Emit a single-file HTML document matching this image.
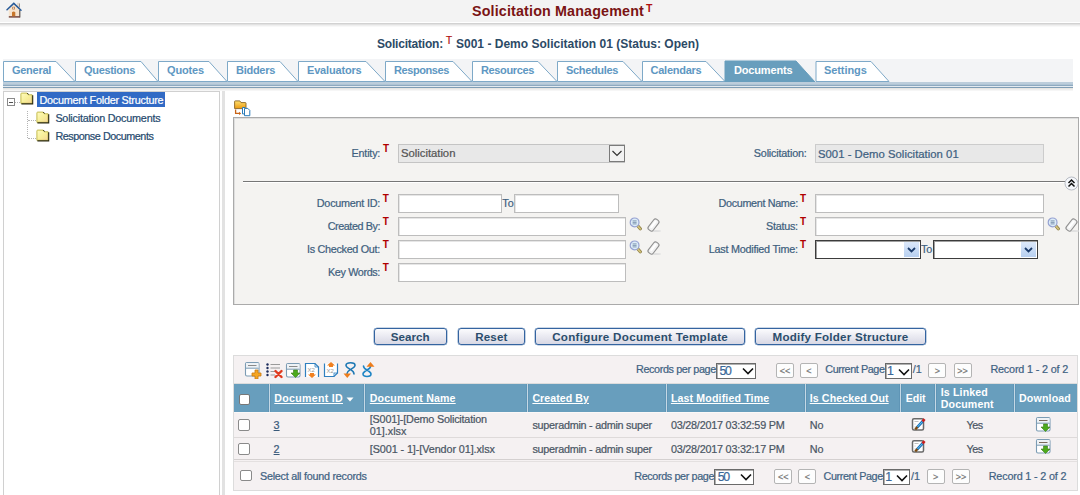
<!DOCTYPE html>
<html><head><meta charset="utf-8"><style>
html,body{margin:0;padding:0;width:1080px;height:495px;overflow:hidden;background:#fff;position:relative;font-family:"Liberation Sans", sans-serif;}
</style></head><body>
<div style="position:absolute;left:0px;top:0px;width:1080px;height:22px;background:#f3f3f3"></div>
<div style="position:absolute;left:0px;top:22px;width:1080px;height:1px;background:#ffffff"></div>
<div style="position:absolute;left:0px;top:23px;width:1080px;height:1px;background:#d2d2d2"></div>
<div style="position:absolute;left:0px;top:24px;width:1080px;height:1px;background:#e2e2e2"></div>
<div style="position:absolute;left:0px;top:25px;width:1080px;height:1px;background:#efefef"></div>
<div style="position:absolute;left:0px;top:26px;width:1080px;height:1px;background:#f8f8f8"></div>
<svg style="position:absolute;left:4px;top:1px" width="22" height="20" viewBox="0 0 22 20">
<rect x="13" y="1.8" width="2.5" height="4.5" fill="#e6dad0"/><rect x="15" y="2.5" width="0.8" height="4" fill="#8a8078"/>
<path d="M4.8 8.5 V16.2 H15.6 V8.5 L10 3.3 Z" fill="#f6e4cf"/>
<rect x="15.2" y="9" width="1.2" height="7.5" fill="#5e5550"/>
<rect x="4.8" y="15.2" width="11" height="1.4" fill="#6e3e36"/>
<path d="M8 15.2 V11.3 Q9.65 9.6 11.3 11.3 V15.2 Z" fill="#c8762a"/>
<rect x="8.3" y="5.8" width="2.6" height="2.6" fill="#c07038"/><rect x="9" y="6.4" width="1.2" height="1.4" fill="#d8eefa"/>
<path d="M3 8.8 L9.8 2.4 L17 9.2" fill="none" stroke="#285a98" stroke-width="1.5" stroke-linecap="round"/>
</svg>
<div style="position:absolute;left:472px;top:4px;-webkit-text-stroke:0.0px #7a1414;font-size:14.3px;line-height:14.3px;font-weight:bold;color:#7a1414;white-space:nowrap;letter-spacing:0.156px;">Solicitation Management</div>
<div style="position:absolute;left:646px;top:3px;-webkit-text-stroke:0.0px #b01010;font-size:10.5px;line-height:10.5px;font-weight:bold;color:#b01010;white-space:nowrap;">T</div>
<div style="position:absolute;left:377px;top:38px;-webkit-text-stroke:0.0px #2c4a66;font-size:12px;line-height:12px;font-weight:bold;color:#2c4a66;white-space:nowrap;letter-spacing:-0.206px;">Solicitation:</div>
<div style="position:absolute;left:446px;top:36px;-webkit-text-stroke:0.22px #b01010;font-size:10px;line-height:10px;font-weight:normal;color:#b01010;white-space:nowrap;">T</div>
<div style="position:absolute;left:456px;top:38px;-webkit-text-stroke:0.0px #2c4a66;font-size:12px;line-height:12px;font-weight:bold;color:#2c4a66;white-space:nowrap;letter-spacing:0.007px;">S001 - Demo Solicitation 01 (Status: Open)</div>
<div style="position:absolute;left:3px;top:59px;width:1070px;height:23px;background:#f3f4f6"></div>
<svg style="position:absolute;left:0;top:0" width="1080" height="90"><polygon points="3.5,61.5 56,61.5 75,81.5 3.5,81.5" fill="#ffffff" stroke="#7ea9c8" stroke-width="1"/><polygon points="75.5,61.5 141,61.5 158,81.5 75.5,81.5" fill="#ffffff" stroke="#7ea9c8" stroke-width="1"/><polygon points="158.5,61.5 209,61.5 227,81.5 158.5,81.5" fill="#ffffff" stroke="#7ea9c8" stroke-width="1"/><polygon points="227.5,61.5 280,61.5 298,81.5 227.5,81.5" fill="#ffffff" stroke="#7ea9c8" stroke-width="1"/><polygon points="298.5,61.5 366,61.5 385,81.5 298.5,81.5" fill="#ffffff" stroke="#7ea9c8" stroke-width="1"/><polygon points="385.5,61.5 453,61.5 472,81.5 385.5,81.5" fill="#ffffff" stroke="#7ea9c8" stroke-width="1"/><polygon points="472.5,61.5 538,61.5 557,81.5 472.5,81.5" fill="#ffffff" stroke="#7ea9c8" stroke-width="1"/><polygon points="557.5,61.5 623,61.5 642,81.5 557.5,81.5" fill="#ffffff" stroke="#7ea9c8" stroke-width="1"/><polygon points="642.5,61.5 706,61.5 725,81.5 642.5,81.5" fill="#ffffff" stroke="#7ea9c8" stroke-width="1"/><polygon points="725,61 796,61 815,82 725,82" fill="#689ebd" stroke="#689ebd" stroke-width="1"/><polygon points="816.0,61.5 871,61.5 889,81.5 816.0,81.5" fill="#ffffff" stroke="#7ea9c8" stroke-width="1"/></svg>
<div style="position:absolute;left:12px;top:65px;-webkit-text-stroke:0.0px #5e97c2;font-size:11px;line-height:11px;font-weight:bold;color:#5e97c2;white-space:nowrap;letter-spacing:-0.281px;">General</div>
<div style="position:absolute;left:84px;top:65px;-webkit-text-stroke:0.0px #5e97c2;font-size:11px;line-height:11px;font-weight:bold;color:#5e97c2;white-space:nowrap;letter-spacing:-0.311px;">Questions</div>
<div style="position:absolute;left:167px;top:65px;-webkit-text-stroke:0.0px #5e97c2;font-size:11px;line-height:11px;font-weight:bold;color:#5e97c2;white-space:nowrap;letter-spacing:-0.151px;">Quotes</div>
<div style="position:absolute;left:236px;top:65px;-webkit-text-stroke:0.0px #5e97c2;font-size:11px;line-height:11px;font-weight:bold;color:#5e97c2;white-space:nowrap;letter-spacing:-0.281px;">Bidders</div>
<div style="position:absolute;left:307px;top:65px;-webkit-text-stroke:0.0px #5e97c2;font-size:11px;line-height:11px;font-weight:bold;color:#5e97c2;white-space:nowrap;letter-spacing:-0.175px;">Evaluators</div>
<div style="position:absolute;left:394px;top:65px;-webkit-text-stroke:0.0px #5e97c2;font-size:11px;line-height:11px;font-weight:bold;color:#5e97c2;white-space:nowrap;letter-spacing:-0.411px;">Responses</div>
<div style="position:absolute;left:481px;top:65px;-webkit-text-stroke:0.0px #5e97c2;font-size:11px;line-height:11px;font-weight:bold;color:#5e97c2;white-space:nowrap;letter-spacing:-0.363px;">Resources</div>
<div style="position:absolute;left:566px;top:65px;-webkit-text-stroke:0.0px #5e97c2;font-size:11px;line-height:11px;font-weight:bold;color:#5e97c2;white-space:nowrap;letter-spacing:-0.337px;">Schedules</div>
<div style="position:absolute;left:650.5px;top:65px;-webkit-text-stroke:0.0px #5e97c2;font-size:11px;line-height:11px;font-weight:bold;color:#5e97c2;white-space:nowrap;letter-spacing:-0.245px;">Calendars</div>
<div style="position:absolute;left:734px;top:65px;-webkit-text-stroke:0.0px #ffffff;font-size:11px;line-height:11px;font-weight:bold;color:#ffffff;white-space:nowrap;letter-spacing:-0.167px;">Documents</div>
<div style="position:absolute;left:824px;top:65px;-webkit-text-stroke:0.0px #5e97c2;font-size:11px;line-height:11px;font-weight:bold;color:#5e97c2;white-space:nowrap;letter-spacing:-0.088px;">Settings</div>
<div style="position:absolute;left:3px;top:82px;width:1070px;height:2px;background:#bccddb"></div>
<div style="position:absolute;left:3px;top:84px;width:1070px;height:1px;background:#b0c4d4"></div>
<div style="position:absolute;left:3px;top:85px;width:1070px;height:1px;background:#8eaac0"></div>
<div style="position:absolute;left:3px;top:86px;width:1070px;height:1px;background:#e3eaf0"></div>
<div style="position:absolute;left:3px;top:87px;width:1070px;height:1px;background:#7f9db5"></div>
<div style="position:absolute;left:3px;top:88px;width:1070px;height:1px;background:#e8e6e2"></div>
<div style="position:absolute;left:3px;top:89px;width:1070px;height:1px;background:#eeeeee"></div>
<div style="position:absolute;left:3px;top:90px;width:1070px;height:1px;background:#f6f6f6"></div>
<div style="position:absolute;left:3px;top:91px;width:217px;height:420px;border:1px solid #d0d0d0;box-sizing:border-box;background:#fff"></div>
<div style="position:absolute;left:222px;top:91px;width:3px;height:420px;background:#e2e2e2"></div>
<div style="position:absolute;left:7px;top:98px;width:8px;height:8px;border:1px solid #8a8a8a;box-sizing:border-box;background:#fff"></div>
<div style="position:absolute;left:9px;top:101.5px;width:4px;height:1.5px;background:#505050"></div>
<div style="position:absolute;left:15px;top:102px;width:5px;height:1px;border-top:1px dotted #b4b4b4"></div>
<div style="position:absolute;left:27px;top:111px;width:1px;height:27px;border-left:1px dotted #b4b4b4"></div>
<div style="position:absolute;left:28px;top:120px;width:8px;height:1px;border-top:1px dotted #b4b4b4"></div>
<div style="position:absolute;left:28px;top:138px;width:8px;height:1px;border-top:1px dotted #b4b4b4"></div>
<svg style="position:absolute;left:20px;top:92px" width="14" height="13" viewBox="0 0 14 13">
<defs><linearGradient id="yf2092" x1="0" y1="0" x2="1" y2="1"><stop offset="0" stop-color="#fffcc0"/><stop offset="0.55" stop-color="#f7ee98"/><stop offset="1" stop-color="#f6d49a"/></linearGradient></defs>
<path d="M0.9 2 Q0.9 1.1 1.7 1.1 H7.1 L8.3 2.8 H12.1 V11.3 H0.9 Z" fill="url(#yf2092)" stroke="#bdb440" stroke-width="0.9"/>
<path d="M12.7 3.2 V11.9 H1.4" fill="none" stroke="#2a2810" stroke-width="1.1"/>
<path d="M7.3 1 L8.5 2.6" fill="none" stroke="#2a2810" stroke-width="0.9"/>
</svg>
<svg style="position:absolute;left:36px;top:111px" width="14" height="13" viewBox="0 0 14 13">
<defs><linearGradient id="yf36111" x1="0" y1="0" x2="1" y2="1"><stop offset="0" stop-color="#fffcc0"/><stop offset="0.55" stop-color="#f7ee98"/><stop offset="1" stop-color="#f6d49a"/></linearGradient></defs>
<path d="M0.9 2 Q0.9 1.1 1.7 1.1 H7.1 L8.3 2.8 H12.1 V11.3 H0.9 Z" fill="url(#yf36111)" stroke="#bdb440" stroke-width="0.9"/>
<path d="M12.7 3.2 V11.9 H1.4" fill="none" stroke="#2a2810" stroke-width="1.1"/>
<path d="M7.3 1 L8.5 2.6" fill="none" stroke="#2a2810" stroke-width="0.9"/>
</svg>
<svg style="position:absolute;left:36px;top:129px" width="14" height="13" viewBox="0 0 14 13">
<defs><linearGradient id="yf36129" x1="0" y1="0" x2="1" y2="1"><stop offset="0" stop-color="#fffcc0"/><stop offset="0.55" stop-color="#f7ee98"/><stop offset="1" stop-color="#f6d49a"/></linearGradient></defs>
<path d="M0.9 2 Q0.9 1.1 1.7 1.1 H7.1 L8.3 2.8 H12.1 V11.3 H0.9 Z" fill="url(#yf36129)" stroke="#bdb440" stroke-width="0.9"/>
<path d="M12.7 3.2 V11.9 H1.4" fill="none" stroke="#2a2810" stroke-width="1.1"/>
<path d="M7.3 1 L8.5 2.6" fill="none" stroke="#2a2810" stroke-width="0.9"/>
</svg>
<div style="position:absolute;left:37px;top:92px;width:128px;height:15px;background:#316ac5"></div>
<div style="position:absolute;left:39.4px;top:95px;-webkit-text-stroke:0.22px #ffffff;font-size:10.8px;line-height:10.8px;font-weight:normal;color:#ffffff;white-space:nowrap;letter-spacing:-0.225px;">Document Folder Structure</div>
<div style="position:absolute;left:55.4px;top:113px;-webkit-text-stroke:0.22px #264a6e;font-size:10.8px;line-height:10.8px;font-weight:normal;color:#264a6e;white-space:nowrap;letter-spacing:-0.219px;">Solicitation Documents</div>
<div style="position:absolute;left:55.4px;top:131px;-webkit-text-stroke:0.22px #264a6e;font-size:10.8px;line-height:10.8px;font-weight:normal;color:#264a6e;white-space:nowrap;letter-spacing:-0.457px;">Response Documents</div>
<div style="position:absolute;left:233px;top:117px;width:846px;height:188px;border:1px solid #aaaaaa;box-sizing:border-box;background:#f4f3f1;box-shadow:inset 1px 1px 0 #dedede"></div>
<div style="position:absolute;left:351.5px;top:148px;-webkit-text-stroke:0.22px #3e5f7e;font-size:10.8px;line-height:10.8px;font-weight:normal;color:#3e5f7e;white-space:nowrap;letter-spacing:-0.188px;">Entity:</div>
<div style="position:absolute;left:383px;top:144px;-webkit-text-stroke:0.0px #b00000;font-size:10px;line-height:10px;font-weight:bold;color:#b00000;white-space:nowrap;">T</div>
<div style="position:absolute;left:398px;top:144px;width:227px;height:19px;border:1px solid #c4c4c4;box-sizing:border-box;background:#e8e8e8"></div>
<div style="position:absolute;left:401px;top:148px;-webkit-text-stroke:0.22px #555555;font-size:11.3px;line-height:11.3px;font-weight:normal;color:#555555;white-space:nowrap;letter-spacing:-0.020px;">Solicitation</div>
<div style="position:absolute;left:609px;top:145px;width:16px;height:17px;border:1px solid #7a7a7a;box-sizing:border-box;background:#f2f2f2"></div>
<svg style="position:absolute;left:609px;top:145px" width="16" height="17"><path d="M3.5 6 L8 10.5 L12.5 6" fill="none" stroke="#333" stroke-width="1.2"/></svg>
<div style="position:absolute;left:753.8px;top:148px;-webkit-text-stroke:0.22px #3e5f7e;font-size:10.8px;line-height:10.8px;font-weight:normal;color:#3e5f7e;white-space:nowrap;letter-spacing:-0.186px;">Solicitation:</div>
<div style="position:absolute;left:815px;top:144px;width:229px;height:19px;border:1px solid #cccccc;box-sizing:border-box;background:#e8e8e8"></div>
<div style="position:absolute;left:818px;top:149px;-webkit-text-stroke:0.22px #3d6080;font-size:11.3px;line-height:11.3px;font-weight:normal;color:#3d6080;white-space:nowrap;letter-spacing:0.025px;">S001 - Demo Solicitation 01</div>
<div style="position:absolute;left:243px;top:181px;width:822px;height:1px;background:#767676"></div>
<div style="position:absolute;left:243px;top:182px;width:822px;height:1px;background:#ffffff"></div>
<svg style="position:absolute;left:1064px;top:176px" width="15" height="15" viewBox="0 0 15 15">
<circle cx="7.5" cy="7.5" r="6.5" fill="#f4f6fa" stroke="#b8bcc4" stroke-width="1"/>
<path d="M4.5 7 L7.5 4 L10.5 7 M4.5 10.5 L7.5 7.5 L10.5 10.5" fill="none" stroke="#111" stroke-width="1.5"/>
</svg>
<div style="position:absolute;left:316.8px;top:198px;-webkit-text-stroke:0.22px #3e5f7e;font-size:10.8px;line-height:10.8px;font-weight:normal;color:#3e5f7e;white-space:nowrap;letter-spacing:-0.235px;">Document ID:</div>
<div style="position:absolute;left:382.7px;top:194px;-webkit-text-stroke:0.0px #b00000;font-size:10px;line-height:10px;font-weight:bold;color:#b00000;white-space:nowrap;">T</div>
<div style="position:absolute;left:327.7px;top:221px;-webkit-text-stroke:0.22px #3e5f7e;font-size:10.8px;line-height:10.8px;font-weight:normal;color:#3e5f7e;white-space:nowrap;letter-spacing:-0.429px;">Created By:</div>
<div style="position:absolute;left:382.7px;top:217px;-webkit-text-stroke:0.0px #b00000;font-size:10px;line-height:10px;font-weight:bold;color:#b00000;white-space:nowrap;">T</div>
<div style="position:absolute;left:307px;top:244px;-webkit-text-stroke:0.22px #3e5f7e;font-size:10.8px;line-height:10.8px;font-weight:normal;color:#3e5f7e;white-space:nowrap;letter-spacing:-0.295px;">Is Checked Out:</div>
<div style="position:absolute;left:382.7px;top:240px;-webkit-text-stroke:0.0px #b00000;font-size:10px;line-height:10px;font-weight:bold;color:#b00000;white-space:nowrap;">T</div>
<div style="position:absolute;left:328px;top:267px;-webkit-text-stroke:0.22px #3e5f7e;font-size:10.8px;line-height:10.8px;font-weight:normal;color:#3e5f7e;white-space:nowrap;letter-spacing:-0.361px;">Key Words:</div>
<div style="position:absolute;left:382.7px;top:263px;-webkit-text-stroke:0.0px #b00000;font-size:10px;line-height:10px;font-weight:bold;color:#b00000;white-space:nowrap;">T</div>
<div style="position:absolute;left:398px;top:194px;width:104px;height:19px;border:1px solid #bdbdbd;box-sizing:border-box;background:#ffffff;box-shadow:inset 1px 1px 0 #e6e6e6"></div>
<div style="position:absolute;left:502.3px;top:198px;-webkit-text-stroke:0.22px #3e5f7e;font-size:10.8px;line-height:10.8px;font-weight:normal;color:#3e5f7e;white-space:nowrap;letter-spacing:-0.053px;">To</div>
<div style="position:absolute;left:514px;top:194px;width:105px;height:19px;border:1px solid #bdbdbd;box-sizing:border-box;background:#ffffff;box-shadow:inset 1px 1px 0 #e6e6e6"></div>
<div style="position:absolute;left:398px;top:217px;width:228px;height:19px;border:1px solid #bdbdbd;box-sizing:border-box;background:#ffffff;box-shadow:inset 1px 1px 0 #e6e6e6"></div>
<div style="position:absolute;left:398px;top:240px;width:228px;height:19px;border:1px solid #bdbdbd;box-sizing:border-box;background:#ffffff;box-shadow:inset 1px 1px 0 #e6e6e6"></div>
<div style="position:absolute;left:398px;top:263px;width:228px;height:19px;border:1px solid #bdbdbd;box-sizing:border-box;background:#ffffff;box-shadow:inset 1px 1px 0 #e6e6e6"></div>
<svg style="position:absolute;left:629px;top:217px" width="14" height="14" viewBox="0 0 14 14">
<path d="M8.3 8.3 L11.3 11.8" stroke="#8a7a40" stroke-width="3.2" stroke-linecap="round"/>
<path d="M8.3 8.3 L11.3 11.8" stroke="#d0c07a" stroke-width="1.8" stroke-linecap="round"/>
<circle cx="5.6" cy="5.4" r="4.4" fill="#dcecf8" stroke="#96a2d2" stroke-width="1.2"/>
<path d="M3.6 3.9 H7.6 M3.6 5.4 H7.6 M3.6 6.9 H7.6" stroke="#7890ac" stroke-width="0.9"/>
</svg>
<svg style="position:absolute;left:646px;top:217px" width="16" height="16" viewBox="0 0 16 16">
<ellipse cx="10" cy="14" rx="5" ry="1" fill="#e0e0e0"/>
<rect x="4.5" y="1.5" width="6" height="13" rx="2.2" transform="rotate(38 7.5 8)" fill="#f2f2f2" stroke="#8e8e8e" stroke-width="1.1"/>
<rect x="6" y="3" width="2" height="9" rx="1" transform="rotate(38 7.5 8)" fill="#ffffff"/>
</svg>
<svg style="position:absolute;left:629px;top:240px" width="14" height="14" viewBox="0 0 14 14">
<path d="M8.3 8.3 L11.3 11.8" stroke="#8a7a40" stroke-width="3.2" stroke-linecap="round"/>
<path d="M8.3 8.3 L11.3 11.8" stroke="#d0c07a" stroke-width="1.8" stroke-linecap="round"/>
<circle cx="5.6" cy="5.4" r="4.4" fill="#dcecf8" stroke="#96a2d2" stroke-width="1.2"/>
<path d="M3.6 3.9 H7.6 M3.6 5.4 H7.6 M3.6 6.9 H7.6" stroke="#7890ac" stroke-width="0.9"/>
</svg>
<svg style="position:absolute;left:646px;top:240px" width="16" height="16" viewBox="0 0 16 16">
<ellipse cx="10" cy="14" rx="5" ry="1" fill="#e0e0e0"/>
<rect x="4.5" y="1.5" width="6" height="13" rx="2.2" transform="rotate(38 7.5 8)" fill="#f2f2f2" stroke="#8e8e8e" stroke-width="1.1"/>
<rect x="6" y="3" width="2" height="9" rx="1" transform="rotate(38 7.5 8)" fill="#ffffff"/>
</svg>
<div style="position:absolute;left:718.6px;top:198px;-webkit-text-stroke:0.22px #3e5f7e;font-size:10.8px;line-height:10.8px;font-weight:normal;color:#3e5f7e;white-space:nowrap;letter-spacing:-0.344px;">Document Name:</div>
<div style="position:absolute;left:800px;top:194px;-webkit-text-stroke:0.0px #b00000;font-size:10px;line-height:10px;font-weight:bold;color:#b00000;white-space:nowrap;">T</div>
<div style="position:absolute;left:766px;top:221px;-webkit-text-stroke:0.22px #3e5f7e;font-size:10.8px;line-height:10.8px;font-weight:normal;color:#3e5f7e;white-space:nowrap;letter-spacing:-0.258px;">Status:</div>
<div style="position:absolute;left:800px;top:217px;-webkit-text-stroke:0.0px #b00000;font-size:10px;line-height:10px;font-weight:bold;color:#b00000;white-space:nowrap;">T</div>
<div style="position:absolute;left:708.8px;top:244px;-webkit-text-stroke:0.22px #3e5f7e;font-size:10.8px;line-height:10.8px;font-weight:normal;color:#3e5f7e;white-space:nowrap;letter-spacing:-0.243px;">Last Modified Time:</div>
<div style="position:absolute;left:800px;top:240px;-webkit-text-stroke:0.0px #b00000;font-size:10px;line-height:10px;font-weight:bold;color:#b00000;white-space:nowrap;">T</div>
<div style="position:absolute;left:815px;top:194px;width:229px;height:19px;border:1px solid #bdbdbd;box-sizing:border-box;background:#ffffff;box-shadow:inset 1px 1px 0 #e6e6e6"></div>
<div style="position:absolute;left:815px;top:217px;width:229px;height:19px;border:1px solid #bdbdbd;box-sizing:border-box;background:#ffffff;box-shadow:inset 1px 1px 0 #e6e6e6"></div>
<svg style="position:absolute;left:1047px;top:217px" width="14" height="14" viewBox="0 0 14 14">
<path d="M8.3 8.3 L11.3 11.8" stroke="#8a7a40" stroke-width="3.2" stroke-linecap="round"/>
<path d="M8.3 8.3 L11.3 11.8" stroke="#d0c07a" stroke-width="1.8" stroke-linecap="round"/>
<circle cx="5.6" cy="5.4" r="4.4" fill="#dcecf8" stroke="#96a2d2" stroke-width="1.2"/>
<path d="M3.6 3.9 H7.6 M3.6 5.4 H7.6 M3.6 6.9 H7.6" stroke="#7890ac" stroke-width="0.9"/>
</svg>
<svg style="position:absolute;left:1064px;top:217px" width="16" height="16" viewBox="0 0 16 16">
<ellipse cx="10" cy="14" rx="5" ry="1" fill="#e0e0e0"/>
<rect x="4.5" y="1.5" width="6" height="13" rx="2.2" transform="rotate(38 7.5 8)" fill="#f2f2f2" stroke="#8e8e8e" stroke-width="1.1"/>
<rect x="6" y="3" width="2" height="9" rx="1" transform="rotate(38 7.5 8)" fill="#ffffff"/>
</svg>
<div style="position:absolute;left:815px;top:240px;width:106px;height:19px;border:1px solid #3c3c3c;box-sizing:border-box;background:#ffffff;box-shadow:inset 1px 1px 0 #a0a0a0"></div>
<div style="position:absolute;left:904px;top:242px;width:15px;height:15px;background:linear-gradient(#dce8fa,#b8d0f0);"></div>
<svg style="position:absolute;left:904px;top:242px" width="15" height="15"><path d="M4 6 L7.5 9.5 L11 6" fill="none" stroke="#1c3c6c" stroke-width="1.8"/></svg>
<div style="position:absolute;left:921px;top:244px;-webkit-text-stroke:0.22px #3e5f7e;font-size:10.8px;line-height:10.8px;font-weight:normal;color:#3e5f7e;white-space:nowrap;letter-spacing:-0.053px;">To</div>
<div style="position:absolute;left:933px;top:240px;width:105px;height:19px;border:1px solid #3c3c3c;box-sizing:border-box;background:#ffffff;box-shadow:inset 1px 1px 0 #a0a0a0"></div>
<div style="position:absolute;left:1021px;top:242px;width:15px;height:15px;background:linear-gradient(#dce8fa,#b8d0f0);"></div>
<svg style="position:absolute;left:1021px;top:242px" width="15" height="15"><path d="M4 6 L7.5 9.5 L11 6" fill="none" stroke="#1c3c6c" stroke-width="1.8"/></svg>
<svg style="position:absolute;left:233px;top:99px" width="18" height="18" viewBox="0 0 18 18">
<defs><linearGradient id="fg" x1="0" y1="0" x2="0" y2="1"><stop offset="0" stop-color="#ffe070"/><stop offset="1" stop-color="#eb9a10"/></linearGradient></defs>
<path d="M1.6 2.5 Q1.6 1.9 2.2 1.9 H6.8 L8 3.6 H12.4 Q13 3.6 13 4.2 V9.6 H1.6 Z" fill="url(#fg)" stroke="#8a6420" stroke-width="0.9"/>
<path d="M2.6 10.6 V14.4 H6.2" fill="none" stroke="#c86418" stroke-width="1.3"/>
<path d="M6 12.7 L8.2 14.4 L6 16.1 Z" fill="#c86418"/>
<path d="M9.5 8.5 H12 L13.4 9.9 V14.9 H9.5 Z" fill="#fff" stroke="#2a7ab8" stroke-width="1"/>
<path d="M11.5 9.4 H14.8 L16.8 11.4 V16.7 H11.5 Z" fill="#fff" stroke="#2a7ab8" stroke-width="1"/>
</svg>
<div style="position:absolute;left:374px;top:328px;width:73px;height:17px;border:1px solid #3464a0;box-shadow:0 0 0 0.3px #3464a0;border-radius:3px;box-sizing:border-box;background:linear-gradient(#fbfbfd,#e6e6ef 60%,#d8d8e4)"></div>
<div style="position:absolute;left:390.8px;top:331px;-webkit-text-stroke:0.0px #2b4d6c;font-size:11.6px;line-height:11.6px;font-weight:bold;color:#2b4d6c;white-space:nowrap;letter-spacing:0.038px;">Search</div>
<div style="position:absolute;left:457.5px;top:328px;width:67.5px;height:17px;border:1px solid #3464a0;box-shadow:0 0 0 0.3px #3464a0;border-radius:3px;box-sizing:border-box;background:linear-gradient(#fbfbfd,#e6e6ef 60%,#d8d8e4)"></div>
<div style="position:absolute;left:475.3px;top:331px;-webkit-text-stroke:0.0px #2b4d6c;font-size:11.6px;line-height:11.6px;font-weight:bold;color:#2b4d6c;white-space:nowrap;letter-spacing:0.124px;">Reset</div>
<div style="position:absolute;left:534.5px;top:328px;width:210.5px;height:17px;border:1px solid #3464a0;box-shadow:0 0 0 0.3px #3464a0;border-radius:3px;box-sizing:border-box;background:linear-gradient(#fbfbfd,#e6e6ef 60%,#d8d8e4)"></div>
<div style="position:absolute;left:552.2px;top:331px;-webkit-text-stroke:0.0px #2b4d6c;font-size:11.6px;line-height:11.6px;font-weight:bold;color:#2b4d6c;white-space:nowrap;letter-spacing:0.296px;">Configure Document Template</div>
<div style="position:absolute;left:755.2px;top:328px;width:171.3px;height:17px;border:1px solid #3464a0;box-shadow:0 0 0 0.3px #3464a0;border-radius:3px;box-sizing:border-box;background:linear-gradient(#fbfbfd,#e6e6ef 60%,#d8d8e4)"></div>
<div style="position:absolute;left:772.6px;top:331px;-webkit-text-stroke:0.0px #2b4d6c;font-size:11.6px;line-height:11.6px;font-weight:bold;color:#2b4d6c;white-space:nowrap;letter-spacing:0.223px;">Modify Folder Structure</div>
<div style="position:absolute;left:233px;top:355px;width:845px;height:136px;border:1px solid #dcdcdc;box-sizing:border-box;background:#f5f1f2"></div>
<div style="position:absolute;left:636px;top:364.0px;-webkit-text-stroke:0.22px #3f6282;font-size:10.8px;line-height:10.8px;font-weight:normal;color:#3f6282;white-space:nowrap;letter-spacing:-0.377px;">Records per page</div>
<div style="position:absolute;left:715.8px;top:362.5px;width:40px;height:16px;border:1px solid #6a6a6a;box-sizing:border-box;background:#fff;box-shadow:inset 1px 1px 0 #b0b0b0"></div>
<div style="position:absolute;left:719.4px;top:364.8px;-webkit-text-stroke:0.22px #3a6898;font-size:12.3px;line-height:12.3px;font-weight:normal;color:#3a6898;white-space:nowrap;letter-spacing:-1.244px;">50</div>
<svg style="position:absolute;left:742px;top:366.5px" width="12" height="8"><path d="M1 1.5 L6 6.5 L11 1.5" fill="none" stroke="#111" stroke-width="1.6"/></svg>
<div style="position:absolute;left:776px;top:362.5px;width:18px;height:15px;border:1px solid #b4b4b4;border-radius:2px;box-sizing:border-box;background:#fdfdfd"></div>
<div style="position:absolute;left:776px;top:366.5px;-webkit-text-stroke:0.22px #777;font-size:9px;line-height:9px;font-weight:normal;color:#777;white-space:nowrap;width:18px;text-align:center">&lt;&lt;</div>
<div style="position:absolute;left:800px;top:362.5px;width:18px;height:15px;border:1px solid #b4b4b4;border-radius:2px;box-sizing:border-box;background:#fdfdfd"></div>
<div style="position:absolute;left:800px;top:366.5px;-webkit-text-stroke:0.22px #777;font-size:9px;line-height:9px;font-weight:normal;color:#777;white-space:nowrap;width:18px;text-align:center">&lt;</div>
<div style="position:absolute;left:928.3px;top:362.5px;width:18px;height:15px;border:1px solid #b4b4b4;border-radius:2px;box-sizing:border-box;background:#fdfdfd"></div>
<div style="position:absolute;left:928.3px;top:366.5px;-webkit-text-stroke:0.22px #777;font-size:9px;line-height:9px;font-weight:normal;color:#777;white-space:nowrap;width:18px;text-align:center">&gt;</div>
<div style="position:absolute;left:953.6px;top:362.5px;width:18px;height:15px;border:1px solid #b4b4b4;border-radius:2px;box-sizing:border-box;background:#fdfdfd"></div>
<div style="position:absolute;left:953.6px;top:366.5px;-webkit-text-stroke:0.22px #777;font-size:9px;line-height:9px;font-weight:normal;color:#777;white-space:nowrap;width:18px;text-align:center">&gt;&gt;</div>
<div style="position:absolute;left:825.3px;top:364.0px;-webkit-text-stroke:0.22px #3f6282;font-size:10.8px;line-height:10.8px;font-weight:normal;color:#3f6282;white-space:nowrap;letter-spacing:-0.418px;">Current Page</div>
<div style="position:absolute;left:884.5px;top:362.5px;width:27px;height:16.5px;border:1px solid #6a6a6a;box-sizing:border-box;background:#fff;box-shadow:inset 1px 1px 0 #b0b0b0"></div>
<div style="position:absolute;left:887px;top:365.3px;-webkit-text-stroke:0.22px #3a6898;font-size:12.3px;line-height:12.3px;font-weight:normal;color:#3a6898;white-space:nowrap;letter-spacing:-0.344px;">1</div>
<svg style="position:absolute;left:898px;top:367.5px" width="12" height="8"><path d="M1 1.5 L6 6.5 L11 1.5" fill="none" stroke="#111" stroke-width="1.6"/></svg>
<div style="position:absolute;left:912.7px;top:364.0px;-webkit-text-stroke:0.22px #3f6282;font-size:10.8px;line-height:10.8px;font-weight:normal;color:#3f6282;white-space:nowrap;letter-spacing:-0.008px;">/1</div>
<div style="position:absolute;left:990.4px;top:364.0px;-webkit-text-stroke:0.22px #3f6282;font-size:10.8px;line-height:10.8px;font-weight:normal;color:#3f6282;white-space:nowrap;letter-spacing:-0.166px;">Record 1 - 2 of 2</div>
<svg style="position:absolute;left:244px;top:361px" width="19" height="18" viewBox="0 0 19 18"><rect x="1.5" y="1.5" width="13.5" height="13.5" rx="1.5" fill="#fff" stroke="#7c9cb4" stroke-width="1.1"/><rect x="2" y="2" width="12.5" height="5" fill="#eef2f6"/><path d="M4 4.5 H12.5" stroke="#8a8a8a" stroke-width="1"/><path d="M2 7.2 H14.5" stroke="#7c9cb4" stroke-width="1"/><path d="M11 9 H14 V12 H17 V15 H14 V18 H11 V15 H8 V12 H11 Z" fill="#f5a623" stroke="#c97a10" stroke-width="0.8"/></svg>
<svg style="position:absolute;left:265px;top:361px" width="18" height="18" viewBox="0 0 18 18"><circle cx="2.5" cy="3.5" r="1.2" fill="#1c2c5c"/><circle cx="2.5" cy="7" r="1.2" fill="#1c2c5c"/><circle cx="2.5" cy="10.5" r="1.2" fill="#1c2c5c"/><circle cx="2.5" cy="14" r="1.2" fill="#1c2c5c"/><path d="M5.5 3.5 H15 M5.5 7 H15 M5.5 10.5 H10 M5.5 14 H10" stroke="#9a9a9a" stroke-width="1.2"/><path d="M10.5 10 L16.5 16 M16.5 10 L10.5 16" stroke="#e03a1e" stroke-width="2.4" stroke-linecap="round"/></svg>
<svg style="position:absolute;left:285px;top:362px" width="16" height="17" viewBox="0 0 16 17"><rect x="1.5" y="1.5" width="13.5" height="13.5" rx="1.5" fill="#fff" stroke="#7c9cb4" stroke-width="1.1"/><rect x="2" y="2" width="12.5" height="5" fill="#eef2f6"/><path d="M4 4.5 H12.5" stroke="#8a8a8a" stroke-width="1"/><path d="M2 7.2 H14.5" stroke="#7c9cb4" stroke-width="1"/><path d="M8.5 8 H12.5 V11 H15 L10.5 15.5 L6 11 H8.5 Z" fill="#4caa1c" stroke="#3a7a18" stroke-width="0.6"/></svg>
<svg style="position:absolute;left:304px;top:362px" width="16" height="16" viewBox="0 0 16 16"><path d="M1.5 15 V1.5 H11 L14.5 5 V15" fill="#fff" stroke="#2f7fbf" stroke-width="1.2"/><path d="M11 1.5 V5 H14.5" fill="none" stroke="#2f7fbf" stroke-width="0.8"/><text x="3.5" y="10" font-size="6" fill="#999" font-family="Liberation Sans">X2</text><path d="M6 11 H10 V12.5 H12 L8 16 L4 12.5 H6 Z" fill="#f08020"/></svg>
<svg style="position:absolute;left:323px;top:361px" width="16" height="17" viewBox="0 0 16 17"><path d="M1.5 2.5 V15.5 H11 L14.5 12 V2.5" fill="#fff" stroke="#2f7fbf" stroke-width="1.2"/><path d="M11 15.5 V12 H14.5" fill="none" stroke="#2f7fbf" stroke-width="0.8"/><text x="3.5" y="12" font-size="6" fill="#999" font-family="Liberation Sans">X2</text><path d="M6 6 H10 V4.5 H12 L8 1 L4 4.5 H6 Z" fill="#f08020"/></svg>
<svg style="position:absolute;left:342px;top:361px" width="15" height="18" viewBox="0 0 15 18"><path d="M5 12.5 C5 10.5 7 9.5 8.5 8.5 C11 7 13 6 13 4.2 C13 2.5 11 1.8 8.5 1.8 C6 1.8 4 2.5 4 4.2 C4 6 6 7 8.5 8.5 C10.5 9.7 12 10.5 12 13" fill="none" stroke="#1d78b4" stroke-width="1.6" stroke-linecap="round"/><path d="M1.5 12.5 H9 L5.25 17 Z" fill="#ee7d1c"/></svg>
<svg style="position:absolute;left:361px;top:361px" width="15" height="18" viewBox="0 0 15 18"><path d="M2.5 5 C2.5 7 4 8 6 9 C8.5 10.5 10 11.5 10 13 C10 14.8 8.5 15.5 6 15.5 C3.5 15.5 2 14.8 2 13 C2 11.5 3.5 10.5 6 9 C8 8 9.5 7 9.5 5.5" fill="none" stroke="#1d84c4" stroke-width="1.6" stroke-linecap="round"/><path d="M5.5 5.8 H13.5 L9.5 1 Z" fill="#ee7d1c"/></svg>
<svg style="position:absolute;left:911px;top:417px" width="15" height="15" viewBox="0 0 15 15"><rect x="1.5" y="1.8" width="11" height="11.2" rx="1.5" fill="#fff" stroke="#6a6a6a" stroke-width="1.5"/><path d="M3.5 4.5 H7.5 M3.5 7 H4.5 M3.5 10 H5" stroke="#b0b0b0" stroke-width="0.8"/><path d="M6 10.5 L12 4" stroke="#1f6fb8" stroke-width="2.6"/><path d="M6.4 10 L11.8 4.2" stroke="#5ec8f0" stroke-width="1"/><path d="M11.5 4.5 L13.6 2.2" stroke="#c81e1e" stroke-width="2.6"/><path d="M4.2 12.3 L6.5 10" stroke="#7a4a12" stroke-width="2.4"/></svg>
<svg style="position:absolute;left:911px;top:439px" width="15" height="15" viewBox="0 0 15 15"><rect x="1.5" y="1.8" width="11" height="11.2" rx="1.5" fill="#fff" stroke="#6a6a6a" stroke-width="1.5"/><path d="M3.5 4.5 H7.5 M3.5 7 H4.5 M3.5 10 H5" stroke="#b0b0b0" stroke-width="0.8"/><path d="M6 10.5 L12 4" stroke="#1f6fb8" stroke-width="2.6"/><path d="M6.4 10 L11.8 4.2" stroke="#5ec8f0" stroke-width="1"/><path d="M11.5 4.5 L13.6 2.2" stroke="#c81e1e" stroke-width="2.6"/><path d="M4.2 12.3 L6.5 10" stroke="#7a4a12" stroke-width="2.4"/></svg>
<svg style="position:absolute;left:1035px;top:416px" width="17" height="17" viewBox="0 0 17 17"><rect x="1.5" y="1.5" width="13.5" height="13.5" rx="1.5" fill="#fff" stroke="#7c9cb4" stroke-width="1.1"/><rect x="2" y="2" width="12.5" height="5" fill="#eef2f6"/><path d="M4 4.5 H12.5" stroke="#7a6a5a" stroke-width="1"/><path d="M2 7.2 H14.5" stroke="#7c9cb4" stroke-width="1"/><path d="M8.5 8 H12.5 V11 H15 L10.5 15.5 L6 11 H8.5 Z" fill="#4caa1c" stroke="#3a7a18" stroke-width="0.6"/></svg>
<svg style="position:absolute;left:1035px;top:438px" width="17" height="17" viewBox="0 0 17 17"><rect x="1.5" y="1.5" width="13.5" height="13.5" rx="1.5" fill="#fff" stroke="#7c9cb4" stroke-width="1.1"/><rect x="2" y="2" width="12.5" height="5" fill="#eef2f6"/><path d="M4 4.5 H12.5" stroke="#7a6a5a" stroke-width="1"/><path d="M2 7.2 H14.5" stroke="#7c9cb4" stroke-width="1"/><path d="M8.5 8 H12.5 V11 H15 L10.5 15.5 L6 11 H8.5 Z" fill="#4caa1c" stroke="#3a7a18" stroke-width="0.6"/></svg>
<div style="position:absolute;left:234px;top:383px;width:843px;height:1px;background:#dcdcdc"></div>
<div style="position:absolute;left:234px;top:384px;width:843px;height:28px;background:#689ebd"></div>
<div style="position:absolute;left:268px;top:384px;width:3px;height:28px;background:#5f95b6"></div>
<div style="position:absolute;left:269px;top:384px;width:1px;height:28px;background:#c4d8e5"></div>
<div style="position:absolute;left:363px;top:384px;width:3px;height:28px;background:#5f95b6"></div>
<div style="position:absolute;left:364px;top:384px;width:1px;height:28px;background:#c4d8e5"></div>
<div style="position:absolute;left:526px;top:384px;width:3px;height:28px;background:#5f95b6"></div>
<div style="position:absolute;left:527px;top:384px;width:1px;height:28px;background:#c4d8e5"></div>
<div style="position:absolute;left:665px;top:384px;width:3px;height:28px;background:#5f95b6"></div>
<div style="position:absolute;left:666px;top:384px;width:1px;height:28px;background:#c4d8e5"></div>
<div style="position:absolute;left:804px;top:384px;width:3px;height:28px;background:#5f95b6"></div>
<div style="position:absolute;left:805px;top:384px;width:1px;height:28px;background:#c4d8e5"></div>
<div style="position:absolute;left:899px;top:384px;width:3px;height:28px;background:#5f95b6"></div>
<div style="position:absolute;left:900px;top:384px;width:1px;height:28px;background:#c4d8e5"></div>
<div style="position:absolute;left:934px;top:384px;width:3px;height:28px;background:#5f95b6"></div>
<div style="position:absolute;left:935px;top:384px;width:1px;height:28px;background:#c4d8e5"></div>
<div style="position:absolute;left:1013px;top:384px;width:3px;height:28px;background:#5f95b6"></div>
<div style="position:absolute;left:1014px;top:384px;width:1px;height:28px;background:#c4d8e5"></div>
<div style="position:absolute;left:234px;top:412px;width:843px;height:1px;background:#fbf8f8"></div>
<div style="position:absolute;left:238.6px;top:393.7px;width:11px;height:11px;border:1px solid #777;border-radius:2px;box-sizing:border-box;background:#fff"></div>
<div style="position:absolute;left:274.3px;top:393px;-webkit-text-stroke:0.0px #ffffff;font-size:10.6px;line-height:10.6px;font-weight:bold;color:#ffffff;white-space:nowrap;letter-spacing:0.305px;text-decoration:underline">Document ID</div>
<svg style="position:absolute;left:346px;top:397px" width="8" height="5"><path d="M0.5 0.5 L7.5 0.5 L4 4.5 Z" fill="#fff"/></svg>
<div style="position:absolute;left:369.8px;top:393px;-webkit-text-stroke:0.0px #ffffff;font-size:10.6px;line-height:10.6px;font-weight:bold;color:#ffffff;white-space:nowrap;letter-spacing:0.177px;text-decoration:underline">Document Name</div>
<div style="position:absolute;left:532.4px;top:393px;-webkit-text-stroke:0.0px #ffffff;font-size:10.6px;line-height:10.6px;font-weight:bold;color:#ffffff;white-space:nowrap;letter-spacing:0.066px;text-decoration:underline">Created By</div>
<div style="position:absolute;left:670.9px;top:393px;-webkit-text-stroke:0.0px #ffffff;font-size:10.6px;line-height:10.6px;font-weight:bold;color:#ffffff;white-space:nowrap;letter-spacing:0.147px;text-decoration:underline">Last Modified Time</div>
<div style="position:absolute;left:809.7px;top:393px;-webkit-text-stroke:0.0px #ffffff;font-size:10.6px;line-height:10.6px;font-weight:bold;color:#ffffff;white-space:nowrap;letter-spacing:0.134px;text-decoration:underline">Is Checked Out</div>
<div style="position:absolute;left:905.8px;top:393px;-webkit-text-stroke:0.0px #ffffff;font-size:10.6px;line-height:10.6px;font-weight:bold;color:#ffffff;white-space:nowrap;letter-spacing:-0.054px;">Edit</div>
<div style="position:absolute;left:940.8px;top:387px;-webkit-text-stroke:0.0px #ffffff;font-size:10.6px;line-height:10.6px;font-weight:bold;color:#ffffff;white-space:nowrap;letter-spacing:0.131px;">Is Linked</div>
<div style="position:absolute;left:940.8px;top:399px;-webkit-text-stroke:0.0px #ffffff;font-size:10.6px;line-height:10.6px;font-weight:bold;color:#ffffff;white-space:nowrap;letter-spacing:0.138px;">Document</div>
<div style="position:absolute;left:1019px;top:393px;-webkit-text-stroke:0.0px #ffffff;font-size:10.6px;line-height:10.6px;font-weight:bold;color:#ffffff;white-space:nowrap;letter-spacing:0.172px;">Download</div>
<div style="position:absolute;left:234px;top:437px;width:843px;height:1px;background:#dedada"></div>
<div style="position:absolute;left:234px;top:459px;width:843px;height:1px;background:#d4d0d0"></div>
<div style="position:absolute;left:234px;top:461px;width:843px;height:1px;background:#e4e0e0"></div>
<div style="position:absolute;left:238.2px;top:419.2px;width:11.5px;height:11.5px;border:1px solid #8a8a8a;border-radius:2px;box-sizing:border-box;background:#fff"></div>
<div style="position:absolute;left:238.2px;top:443.2px;width:11.5px;height:11.5px;border:1px solid #8a8a8a;border-radius:2px;box-sizing:border-box;background:#fff"></div>
<div style="position:absolute;left:273.6px;top:420px;-webkit-text-stroke:0.22px #3a5a7a;font-size:10.8px;line-height:10.8px;font-weight:normal;color:#3a5a7a;white-space:nowrap;letter-spacing:-0.016px;text-decoration:underline">3</div>
<div style="position:absolute;left:273.6px;top:444px;-webkit-text-stroke:0.22px #3a5a7a;font-size:10.8px;line-height:10.8px;font-weight:normal;color:#3a5a7a;white-space:nowrap;letter-spacing:-0.016px;text-decoration:underline">2</div>
<div style="position:absolute;left:369.8px;top:414px;-webkit-text-stroke:0.22px #4a5664;font-size:10.8px;line-height:10.8px;font-weight:normal;color:#4a5664;white-space:nowrap;letter-spacing:-0.193px;">[S001]-[Demo Solicitation</div>
<div style="position:absolute;left:369.8px;top:426px;-webkit-text-stroke:0.22px #4a5664;font-size:10.8px;line-height:10.8px;font-weight:normal;color:#4a5664;white-space:nowrap;">01].xlsx</div>
<div style="position:absolute;left:369.8px;top:444px;-webkit-text-stroke:0.22px #4a5664;font-size:10.8px;line-height:10.8px;font-weight:normal;color:#4a5664;white-space:nowrap;letter-spacing:-0.083px;">[S001 - 1]-[Vendor 01].xlsx</div>
<div style="position:absolute;left:532.4px;top:420px;-webkit-text-stroke:0.22px #4a5664;font-size:10.8px;line-height:10.8px;font-weight:normal;color:#4a5664;white-space:nowrap;letter-spacing:-0.247px;">superadmin - admin super</div>
<div style="position:absolute;left:809.7px;top:420px;-webkit-text-stroke:0.22px #4a5664;font-size:10.8px;line-height:10.8px;font-weight:normal;color:#4a5664;white-space:nowrap;">No</div>
<div style="position:absolute;left:966.5px;top:420px;-webkit-text-stroke:0.22px #4a5664;font-size:10.8px;line-height:10.8px;font-weight:normal;color:#4a5664;white-space:nowrap;letter-spacing:-0.442px;">Yes</div>
<div style="position:absolute;left:532.4px;top:444px;-webkit-text-stroke:0.22px #4a5664;font-size:10.8px;line-height:10.8px;font-weight:normal;color:#4a5664;white-space:nowrap;letter-spacing:-0.247px;">superadmin - admin super</div>
<div style="position:absolute;left:809.7px;top:444px;-webkit-text-stroke:0.22px #4a5664;font-size:10.8px;line-height:10.8px;font-weight:normal;color:#4a5664;white-space:nowrap;">No</div>
<div style="position:absolute;left:966.5px;top:444px;-webkit-text-stroke:0.22px #4a5664;font-size:10.8px;line-height:10.8px;font-weight:normal;color:#4a5664;white-space:nowrap;letter-spacing:-0.442px;">Yes</div>
<div style="position:absolute;left:670.9px;top:420px;-webkit-text-stroke:0.22px #4a5664;font-size:10.8px;line-height:10.8px;font-weight:normal;color:#4a5664;white-space:nowrap;letter-spacing:-0.212px;">03/28/2017 03:32:59 PM</div>
<div style="position:absolute;left:670.9px;top:444px;-webkit-text-stroke:0.22px #4a5664;font-size:10.8px;line-height:10.8px;font-weight:normal;color:#4a5664;white-space:nowrap;letter-spacing:-0.212px;">03/28/2017 03:32:17 PM</div>
<div style="position:absolute;left:240px;top:469.5px;width:12px;height:11.5px;border:1px solid #8a8a8a;border-radius:2px;box-sizing:border-box;background:#fff"></div>
<div style="position:absolute;left:260px;top:471px;-webkit-text-stroke:0.22px #3f6282;font-size:10.8px;line-height:10.8px;font-weight:normal;color:#3f6282;white-space:nowrap;letter-spacing:-0.256px;">Select all found records</div>
<div style="position:absolute;left:634.3px;top:470.5px;-webkit-text-stroke:0.22px #3f6282;font-size:10.8px;line-height:10.8px;font-weight:normal;color:#3f6282;white-space:nowrap;letter-spacing:-0.377px;">Records per page</div>
<div style="position:absolute;left:714.0999999999999px;top:468.5px;width:40px;height:16px;border:1px solid #6a6a6a;box-sizing:border-box;background:#fff;box-shadow:inset 1px 1px 0 #b0b0b0"></div>
<div style="position:absolute;left:717.6999999999999px;top:470.8px;-webkit-text-stroke:0.22px #3a6898;font-size:12.3px;line-height:12.3px;font-weight:normal;color:#3a6898;white-space:nowrap;letter-spacing:-1.244px;">50</div>
<svg style="position:absolute;left:740.3px;top:472.5px" width="12" height="8"><path d="M1 1.5 L6 6.5 L11 1.5" fill="none" stroke="#111" stroke-width="1.6"/></svg>
<div style="position:absolute;left:774.3px;top:468.5px;width:18px;height:15px;border:1px solid #b4b4b4;border-radius:2px;box-sizing:border-box;background:#fdfdfd"></div>
<div style="position:absolute;left:774.3px;top:472.5px;-webkit-text-stroke:0.22px #777;font-size:9px;line-height:9px;font-weight:normal;color:#777;white-space:nowrap;width:18px;text-align:center">&lt;&lt;</div>
<div style="position:absolute;left:798.3px;top:468.5px;width:18px;height:15px;border:1px solid #b4b4b4;border-radius:2px;box-sizing:border-box;background:#fdfdfd"></div>
<div style="position:absolute;left:798.3px;top:472.5px;-webkit-text-stroke:0.22px #777;font-size:9px;line-height:9px;font-weight:normal;color:#777;white-space:nowrap;width:18px;text-align:center">&lt;</div>
<div style="position:absolute;left:926.5999999999999px;top:468.5px;width:18px;height:15px;border:1px solid #b4b4b4;border-radius:2px;box-sizing:border-box;background:#fdfdfd"></div>
<div style="position:absolute;left:926.5999999999999px;top:472.5px;-webkit-text-stroke:0.22px #777;font-size:9px;line-height:9px;font-weight:normal;color:#777;white-space:nowrap;width:18px;text-align:center">&gt;</div>
<div style="position:absolute;left:951.9px;top:468.5px;width:18px;height:15px;border:1px solid #b4b4b4;border-radius:2px;box-sizing:border-box;background:#fdfdfd"></div>
<div style="position:absolute;left:951.9px;top:472.5px;-webkit-text-stroke:0.22px #777;font-size:9px;line-height:9px;font-weight:normal;color:#777;white-space:nowrap;width:18px;text-align:center">&gt;&gt;</div>
<div style="position:absolute;left:823.5999999999999px;top:470.5px;-webkit-text-stroke:0.22px #3f6282;font-size:10.8px;line-height:10.8px;font-weight:normal;color:#3f6282;white-space:nowrap;letter-spacing:-0.418px;">Current Page</div>
<div style="position:absolute;left:882.8px;top:468.5px;width:27px;height:16.5px;border:1px solid #6a6a6a;box-sizing:border-box;background:#fff;box-shadow:inset 1px 1px 0 #b0b0b0"></div>
<div style="position:absolute;left:885.3px;top:471.3px;-webkit-text-stroke:0.22px #3a6898;font-size:12.3px;line-height:12.3px;font-weight:normal;color:#3a6898;white-space:nowrap;letter-spacing:-0.344px;">1</div>
<svg style="position:absolute;left:896.3px;top:473.5px" width="12" height="8"><path d="M1 1.5 L6 6.5 L11 1.5" fill="none" stroke="#111" stroke-width="1.6"/></svg>
<div style="position:absolute;left:911.0px;top:470.5px;-webkit-text-stroke:0.22px #3f6282;font-size:10.8px;line-height:10.8px;font-weight:normal;color:#3f6282;white-space:nowrap;letter-spacing:-0.008px;">/1</div>
<div style="position:absolute;left:988.6999999999999px;top:470.5px;-webkit-text-stroke:0.22px #3f6282;font-size:10.8px;line-height:10.8px;font-weight:normal;color:#3f6282;white-space:nowrap;letter-spacing:-0.166px;">Record 1 - 2 of 2</div>
</body></html>
